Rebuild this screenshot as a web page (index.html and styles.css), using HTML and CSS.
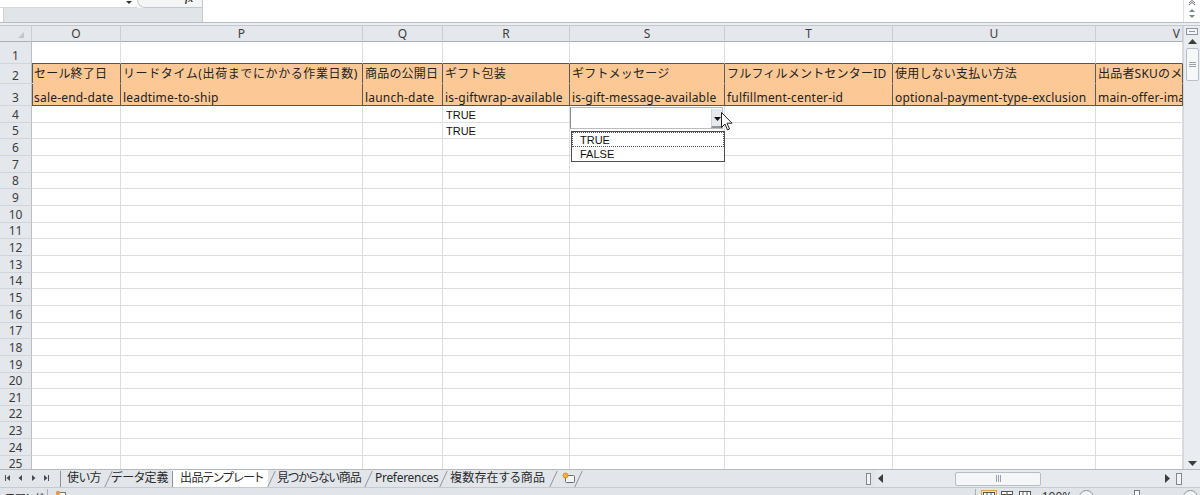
FILE: index.html
```html
<!DOCTYPE html>
<html lang="ja">
<head>
<meta charset="utf-8">
<title>出品テンプレート</title>
<link rel="stylesheet" href="styles.css">
</head>
<body>
<div class="app">
  <div class="fbar">
    <div class="nb">
      <div class="nb-top">
        <div class="namebox"><span class="nb-arrow"></span></div>
        <div class="fxtab"><span class="fx">fx</span></div>
      </div>
      <div class="nb-band"></div>
    </div>
    <div class="formula"></div>
    <div class="fbar-btns">
      <svg width="12" height="22" viewBox="0 0 12 22"><path d="M3 3 L6 0.5 L9 3 M3 5 L6 2.5 L9 5" fill="none" stroke="#6d7580" stroke-width="1"/><path d="M3 12 L6 9 L9 12 Z" fill="#7c848f"/><path d="M3 15 L6 18 L9 15 Z" fill="#7c848f"/></svg>
    </div>
  </div>
  <div class="sep"></div>
  <div class="sheet">
    <table class="grid">
      <colgroup>
        <col class="c-rh"><col class="c-o"><col class="c-p"><col class="c-q"><col class="c-r"><col class="c-s"><col class="c-t"><col class="c-u"><col class="c-v">
      </colgroup>
      <tr class="rh">
        <th class="corner"><span class="tri"></span></th><th>O</th><th>P</th><th>Q</th><th>R</th><th>S</th><th>T</th><th>U</th><th class="vh">V</th>
      </tr>
      <tr class="r1"><th>1</th><td></td><td></td><td></td><td></td><td></td><td></td><td></td><td></td></tr>
      <tr class="r2"><th>2</th><td class="first">セール終了日</td><td class="wide">リードタイム(出荷までにかかる作業日数)</td><td>商品の公開日</td><td>ギフト包装</td><td>ギフトメッセージ</td><td>フルフィルメントセンターID</td><td>使用しない支払い方法</td><td>出品者SKUのメイン画像</td></tr>
      <tr class="r3"><th>3</th><td class="first">sale-end-date</td><td>leadtime-to-ship</td><td>launch-date</td><td>is-giftwrap-available</td><td>is-gift-message-available</td><td>fulfillment-center-id</td><td>optional-payment-type-exclusion</td><td>main-offer-image</td></tr>
      <tr class="r"><th>4</th><td></td><td></td><td></td><td class="val">TRUE</td><td></td><td></td><td></td><td></td></tr>
      <tr class="r"><th>5</th><td></td><td></td><td></td><td class="val">TRUE</td><td></td><td></td><td></td><td></td></tr>
      <tr class="r"><th>6</th><td></td><td></td><td></td><td></td><td></td><td></td><td></td><td></td></tr>
      <tr class="r"><th>7</th><td></td><td></td><td></td><td></td><td></td><td></td><td></td><td></td></tr>
      <tr class="r"><th>8</th><td></td><td></td><td></td><td></td><td></td><td></td><td></td><td></td></tr>
      <tr class="r"><th>9</th><td></td><td></td><td></td><td></td><td></td><td></td><td></td><td></td></tr>
      <tr class="r"><th>10</th><td></td><td></td><td></td><td></td><td></td><td></td><td></td><td></td></tr>
      <tr class="r"><th>11</th><td></td><td></td><td></td><td></td><td></td><td></td><td></td><td></td></tr>
      <tr class="r"><th>12</th><td></td><td></td><td></td><td></td><td></td><td></td><td></td><td></td></tr>
      <tr class="r"><th>13</th><td></td><td></td><td></td><td></td><td></td><td></td><td></td><td></td></tr>
      <tr class="r"><th>14</th><td></td><td></td><td></td><td></td><td></td><td></td><td></td><td></td></tr>
      <tr class="r"><th>15</th><td></td><td></td><td></td><td></td><td></td><td></td><td></td><td></td></tr>
      <tr class="r"><th>16</th><td></td><td></td><td></td><td></td><td></td><td></td><td></td><td></td></tr>
      <tr class="r"><th>17</th><td></td><td></td><td></td><td></td><td></td><td></td><td></td><td></td></tr>
      <tr class="r"><th>18</th><td></td><td></td><td></td><td></td><td></td><td></td><td></td><td></td></tr>
      <tr class="r"><th>19</th><td></td><td></td><td></td><td></td><td></td><td></td><td></td><td></td></tr>
      <tr class="r"><th>20</th><td></td><td></td><td></td><td></td><td></td><td></td><td></td><td></td></tr>
      <tr class="r"><th>21</th><td></td><td></td><td></td><td></td><td></td><td></td><td></td><td></td></tr>
      <tr class="r"><th>22</th><td></td><td></td><td></td><td></td><td></td><td></td><td></td><td></td></tr>
      <tr class="r"><th>23</th><td></td><td></td><td></td><td></td><td></td><td></td><td></td><td></td></tr>
      <tr class="r"><th>24</th><td></td><td></td><td></td><td></td><td></td><td></td><td></td><td></td></tr>
      <tr class="r"><th>25</th><td></td><td></td><td></td><td></td><td></td><td></td><td></td><td></td></tr>
    </table>
    <div class="vscroll">
      <div class="vsplit"><span></span></div>
      <div class="vbtn"><svg width="9" height="5" viewBox="0 0 9 5"><path d="M0 5 L4.5 0 L9 5 Z" fill="#3c3c3c"/></svg></div>
      <div class="vtrack">
        <div class="vthumb"><span class="grip-h"></span></div>
      </div>
      <div class="vbtn"><svg width="9" height="5" viewBox="0 0 9 5"><path d="M0 0 L4.5 5 L9 0 Z" fill="#3c3c3c"/></svg></div>
    </div>

    <div class="dd-cell"><div class="dd-btn"><svg width="7" height="4" viewBox="0 0 7 4"><path d="M0 0 L3.5 4 L7 0 Z" fill="#111"/></svg></div></div>
    <ul class="dd-list">
      <li class="focus">TRUE</li>
      <li>FALSE</li>
    </ul>
    <svg class="cursor" width="12" height="20" viewBox="0 0 12 20"><path d="M0.5 0.5 L0.5 15.5 L4 12 L6.5 18 L8.5 17 L6 11.2 L11 11.2 Z" fill="#fff" stroke="#222" stroke-width="1" stroke-linejoin="round"/></svg>
  </div>
  <div class="tabbar">
    <div class="tabnav">
      <svg width="56" height="17" viewBox="0 0 56 17"><rect x="5" y="5" width="1" height="6" fill="#4a4a4a"/><path d="M10 5 L6.5 8 L10 11 Z" fill="#4a4a4a"/><path d="M22 5 L18.5 8 L22 11 Z" fill="#4a4a4a"/><path d="M32 5 L35.5 8 L32 11 Z" fill="#4a4a4a"/><path d="M44 5 L47.5 8 L44 11 Z" fill="#4a4a4a"/><rect x="48" y="5" width="1" height="6" fill="#4a4a4a"/></svg>
    </div>
    <div class="tabs">
      <span class="tab t1">使い方</span>
      <span class="tab t2">データ定義</span>
      <span class="tab active t3">出品テンプレート</span>
      <span class="tab t4">見つからない商品</span>
      <span class="tab t5">Preferences</span>
      <span class="tab t6">複数存在する商品</span>
      <span class="tab tnew"><svg width="14" height="12" viewBox="0 0 14 12"><rect x="3.5" y="3.5" width="9" height="7" rx="1" fill="#f4f4f4" stroke="#6a6f76"/><circle cx="3.5" cy="3.5" r="2.5" fill="#f2b33d" stroke="#c9851c" stroke-width="0.8"/></svg></span>
      <span class="tab tend"></span>
    </div>
    <div class="hsplit"><span></span></div>
    <div class="hscroll">
      <span class="harrow"><svg width="5" height="9" viewBox="0 0 5 9"><path d="M5 0 L0 4.5 L5 9 Z" fill="#3c3c3c"/></svg></span>
      <div class="htrack"><div class="hthumb"><span class="grip-v"></span></div></div>
      <span class="harrow"><svg width="5" height="9" viewBox="0 0 5 9"><path d="M0 0 L5 4.5 L0 9 Z" fill="#3c3c3c"/></svg></span>
      <span class="hbox"></span>
    </div>
    <div class="hcorner"></div>
  </div>
  <div class="status">
    <span class="st-text">コマンド</span>
    <span class="st-sep"></span>
    <span class="st-icon"><svg width="12" height="12" viewBox="0 0 12 12"><rect x="2.5" y="2.5" width="8" height="8" fill="#f6f6f6" stroke="#777"/><circle cx="3" cy="3" r="2.2" fill="#e89a3c"/></svg></span>
    <span class="st-fill"></span>
    <span class="st-sep"></span>
    <span class="view sel"><svg width="14" height="10" viewBox="0 0 14 10"><rect x="1.5" y="1.5" width="11" height="8" fill="#fff" stroke="#555"/><path d="M1.5 4.5 H12.5 M1.5 7 H12.5 M5 1.5 V9.5 M9 1.5 V9.5" stroke="#555"/></svg></span>
    <span class="view"><svg width="14" height="10" viewBox="0 0 14 10"><rect x="1.5" y="1.5" width="11" height="8" fill="#fff" stroke="#555"/><path d="M1.5 4.5 H12.5 M7 1.5 V9.5" stroke="#555"/></svg></span>
    <span class="view"><svg width="14" height="10" viewBox="0 0 14 10"><rect x="1.5" y="1.5" width="11" height="8" fill="#fff" stroke="#555"/><path d="M5 1.5 V9.5 M9 1.5 V9.5" stroke="#555"/></svg></span>
    <span class="zoomtxt">100%</span>
    <span class="zbtn"></span>
    <span class="zslider"><span class="zknob"></span></span>
    <span class="zbtn plus"></span>
  </div>
</div>
</body>
</html>
```

FILE: styles.css
```css
* { box-sizing: border-box; margin: 0; padding: 0; }
html, body { width: 1200px; height: 495px; overflow: hidden; background: #fff; }
body {
  font-family: "Noto Sans", "Noto Sans CJK JP", sans-serif;
  font-size: 12px;
  color: #222;
}
.app { display: flex; flex-direction: column; height: 495px; overflow: hidden; }

/* formula bar */
.fbar { display: flex; height: 22px; flex: none; }
.nb { width: 203px; display: flex; flex-direction: column; flex: none; }
.nb-top { display: flex; height: 8px; }
.namebox { width: 137px; position: relative; background: #fff; border-bottom: 1px solid #d3d7dc; }
.nb-arrow {
  position: absolute; left: 126px; top: 1px;
  border-left: 3px solid transparent; border-right: 3px solid transparent; border-top: 3px solid #333;
}
.fxtab {
  flex: 1; position: relative; background: #f4f5f7;
  border: 1px solid #c3c8ce; border-top: none; border-radius: 0 0 0 9px;
}
.fx { position: absolute; left: 47px; top: -6px; font: italic bold 10px/10px "Liberation Serif", serif; color: #333; }
.nb-band { flex: 1; margin-left: 3px; background: #e1e5ea; border-left: 1px solid #cdd1d6; border-right: 1px solid #c5cad0; }
.formula { flex: 1; background: #fff; }
.fbar-btns { width: 17px; flex: none; display: flex; justify-content: center; border-left: 1px solid #dde0e4; background: #fff; }

.sep { height: 4px; flex: none; border-top: 1px solid #b7bcc3; border-bottom: 1px solid #c3c7cd; background: #eceef1; }

/* sheet */
.sheet { display: flex; flex: none; height: 443px; position: relative; overflow: hidden; }
.grid { border-collapse: separate; border-spacing: 0; table-layout: fixed; width: 1183px; flex: none; align-self: flex-start; }
.c-rh { width: 32px; } .c-o { width: 89px; } .c-p { width: 242px; } .c-q { width: 80px; }
.c-r { width: 127px; } .c-s { width: 155px; } .c-t { width: 168px; } .c-u { width: 203px; } .c-v { width: 87px; }

.grid td, .grid th {
  padding: 0 2px; border-right: 1px solid #dcdee0; border-bottom: 1px solid #dcdee0;
  overflow: hidden; white-space: nowrap; vertical-align: bottom; text-align: left;
  font-weight: normal; line-height: 14px;
}
.grid th {
  background: #e4e7eb; color: #3d3d3d; text-align: center;
  border-right: 1px solid #b8bec6; border-bottom: 1px solid #d1d5da;
  font-size: 12px; padding: 0;
}
.grid tr.rh th {
  height: 16px; vertical-align: middle; border-right: 1px solid #c9ced4; border-bottom: 1px solid #aab0b8;
  padding: 0;
}
.grid tr.rh th.vh { text-align: right; padding-right: 2px; }
.corner { position: relative; }
.tri {
  position: absolute; right: 7px; bottom: 3px;
  border-left: 6px solid transparent; border-bottom: 6px solid #c2c6cc;
}
.r1 { height: 22px; }
.r2 { height: 20px; }
.r3 { height: 22px; }
.r { height: 16.67px; }
.r1 td { border-bottom-color: #565656; }
.r2 td, .r3 td { background: #fcc996; border-right-color: #5a5a5a; letter-spacing: 0.2px; }
.r2 td { border-bottom-color: #fcc996; vertical-align: middle; padding-top: 1px; }
.r2 td.wide { letter-spacing: 0.6px; }
.r3 td { border-bottom-color: #565656; padding-bottom: 0; }
.r2 td.first, .r3 td.first { box-shadow: inset 1px 0 0 #5a5a5a; }
.grid td.val { font-family: "Liberation Sans", Arial, sans-serif; font-size: 11px; padding-left: 3px; color: #111; }

/* vertical scrollbar */
.vscroll { width: 17px; flex: none; display: flex; flex-direction: column; background: #e9ecf0; border-left: 1px solid #d4d8dd; }
.vsplit { height: 10px; display: flex; justify-content: center; align-items: center; }
.vsplit span { width: 12px; height: 7px; border: 1px solid #8f969f; background: #f3f4f6; position: relative; }
.vsplit span::after { content: ""; position: absolute; left: 2px; right: 2px; top: 2px; height: 1px; background: #8f969f; }
.vbtn { height: 11px; display: flex; align-items: center; justify-content: center; }
.vtrack { flex: 1; padding: 1px 1px 0 2px; }
.vthumb { height: 33px; background: #f6f7f9; border: 1px solid #b9bfc7; border-radius: 2px; display: flex; align-items: center; justify-content: center; }
.grip-h { width: 7px; height: 5px; border-top: 1px solid #9aa1aa; border-bottom: 1px solid #9aa1aa; position: relative; }
.grip-h::after { content: ""; position: absolute; left: 0; right: 0; top: 1px; height: 1px; background: #9aa1aa; }

/* data validation dropdown */
.dd-cell {
  position: absolute; left: 570px; top: 81px; width: 153px; height: 22px;
  background: #fff; border: 1px solid #b7bbc0; border-left-color: #8a8e94;
}
.dd-btn {
  position: absolute; right: 0; top: 1px; width: 11px; height: 19px;
  background: #e7e9ec; border-left: 1px solid #cfd3d8; border-bottom: 2px solid #8e949c;
  display: flex; align-items: center; justify-content: center; padding-top: 2px;
}
.dd-list {
  position: absolute; left: 571px; top: 105px; width: 154px; height: 31px;
  list-style: none; background: #fff; border: 1px solid #4d4d4d;
  font-family: "Liberation Sans", Arial, sans-serif; font-size: 11px; color: #111;
}
.dd-list li { height: 15px; line-height: 14px; padding-left: 8px; }
.dd-list li.focus { border: 1px dotted #555; padding-left: 7px; }
.cursor { position: absolute; left: 721px; top: 86px; }

/* sheet tabs */
.tabbar { height: 18px; flex: none; display: flex; align-items: stretch; background: #e2e6eb; border-top: 1px solid #b3b9c1; }
.tabnav { width: 60px; flex: none; display: flex; align-items: center; }
.tabs { display: flex; width: 802px; flex: none; }
.tab {
  position: relative; height: 17px; line-height: 16px; font-size: 12px; color: #2b2b2b;
  font-family: "Noto Sans", "Noto Sans CJK JP", sans-serif; font-feature-settings: "palt";
  padding: 0 4px 0 9px; white-space: nowrap; flex: none;
}
.tab::before {
  content: ""; position: absolute; left: 3px; top: 1px; bottom: 0; width: 0;
  border-left: 1px solid #8d949d; transform: skewX(-25deg);
}
.tab.t1::before { transform: none; left: 0; }
.t1 { padding-left: 7px; width: 45px; letter-spacing: -0.4px; }
.t2 { width: 67px; padding-left: 6px; }
.t3 { width: 96px; padding-left: 8px; background: #fff; letter-spacing: -0.6px; }
.t3::before { transform: none; left: 0; }
.t4 { width: 97px; padding-left: 9px; letter-spacing: -1.1px; }
.t5 { width: 75px; padding-left: 10px; letter-spacing: -0.3px; }
.t6 { width: 110px; padding-left: 10px; letter-spacing: 0.2px; }
.tnew { width: 25px; padding-left: 12px; padding-top: 2px; }
.tend { width: 10px; }

.hsplit { width: 13px; flex: none; display: flex; align-items: center; justify-content: center; }
.hsplit span { width: 5px; height: 12px; border: 1px solid #80878f; background: #f3f4f6; }
.hscroll { flex: 1; display: flex; align-items: center; background: #e6e9ed; }
.harrow { width: 11px; flex: none; display: flex; justify-content: center; }
.htrack { flex: 1; height: 16px; padding: 1px 0; display: flex; }
.hthumb {
  margin-left: 69px; width: 86px; background: #f5f6f8; border: 1px solid #b7bdc5; border-radius: 2px;
  display: flex; align-items: center; justify-content: center;
}
.grip-v { width: 5px; height: 7px; border-left: 1px solid #9aa1aa; border-right: 1px solid #9aa1aa; position: relative; }
.grip-v::after { content: ""; position: absolute; top: 0; bottom: 0; left: 1px; width: 1px; background: #9aa1aa; }
.hbox { width: 6px; height: 12px; border: 1px solid #80878f; background: #f3f4f6; margin: 0 1px 0 3px; flex: none; }
.hcorner { width: 17px; flex: none; background: #e9ecf0; }

/* status bar */
.status {
  height: 22px; flex: none; display: flex; align-items: flex-start; padding-top: 2px;
  background: #e1e5ea; border-top: 1px solid #c6cbd1; font-size: 12px; color: #333;
}
.st-text {
  padding-left: 5px; width: 47px; line-height: 14px; white-space: nowrap; overflow: hidden;
  font-family: "Noto Sans CJK JP", sans-serif; font-size: 11px; font-feature-settings: "palt";
}
.st-sep { width: 1px; height: 16px; background: #a9afb7; margin-top: -1px; }
.st-icon { width: 26px; display: flex; justify-content: center; }
.st-fill { flex: 1; }
.view { width: 16px; height: 14px; display: flex; justify-content: center; margin-left: 2px; }
.view.sel { background: #fde3a0; border: 1px solid #e3a23a; margin-left: 5px; }
.zoomtxt { width: 44px; text-align: center; line-height: 14px; margin-left: 2px; }
.zbtn { width: 15px; height: 15px; border: 1px solid #8a9099; border-radius: 50%; background: #f4f5f7; }
.zslider { width: 88px; height: 14px; position: relative; }
.zslider::before { content: ""; position: absolute; left: 4px; right: 4px; top: 6px; height: 1px; background: #8a9099; }
.zknob { position: absolute; left: 40px; top: 0; width: 6px; height: 12px; background: #fff; border: 1px solid #707780; }
.zbtn.plus { margin-left: 1px; margin-right: 2px; }
```
